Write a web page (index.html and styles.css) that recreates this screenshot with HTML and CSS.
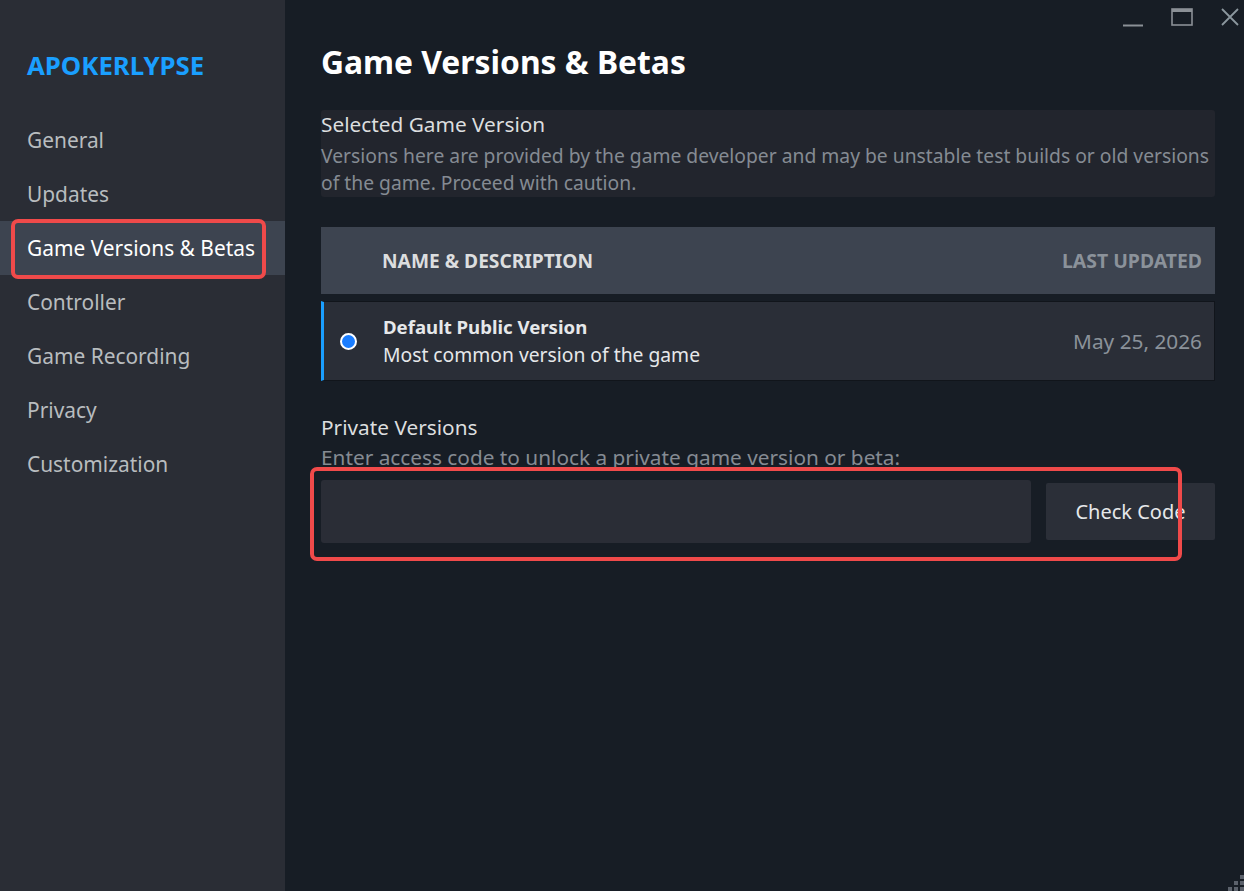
FILE: index.html
```html
<!DOCTYPE html>
<html lang="en">

<head>
    <meta charset="UTF-8">
    <meta name="viewport" content="width=device-width, initial-scale=1.0">
    <title>Game Versions &amp; Betas</title>
    <link rel="stylesheet" href="styles.css">
</head>

<body>
    <div class="app">
        <div class="sidebar">
            <h2 class="game-title">APOKERLYPSE</h2>
            <ul class="nav">
                <li>General</li>
                <li>Updates</li>
                <li class="active marked">Game Versions &amp; Betas</li>
                <li>Controller</li>
                <li>Game Recording</li>
                <li>Privacy</li>
                <li>Customization</li>
            </ul>
        </div>

        <div class="main">
            <h1>Game Versions &amp; Betas</h1>

            <div class="info-box">
                <div class="label">Selected Game Version</div>
                <p class="desc">Versions here are provided by the game developer and may be unstable test builds or old versions<br>of the game. Proceed with caution.</p>
            </div>

            <div class="table-head">
                <span class="col-name">NAME &amp; DESCRIPTION</span>
                <span class="col-date">LAST UPDATED</span>
            </div>

            <div class="version-row selected">
                <span class="radio"></span>
                <div class="version-text">
                    <div class="version-name">Default Public Version</div>
                    <div class="version-desc">Most common version of the game</div>
                </div>
                <span class="version-date">May 25, 2026</span>
            </div>

            <div class="private">
                <div class="label">Private Versions</div>
                <p class="desc">Enter access code to unlock a private game version or beta:</p>
                <div class="code-row marked">
                    <input type="text" class="code-input">
                    <button class="check-btn">Check Code</button>
                </div>
            </div>
        </div>

        <!-- window buttons sit over the main area -->
        <div class="window-controls">
            <svg width="22" height="20" viewBox="0 0 22 20"><line x1="1" y1="18.5" x2="21" y2="18.5" stroke="#8b9096" stroke-width="2"/></svg>
            <svg width="24" height="20" viewBox="0 0 24 20"><rect x="2" y="2" width="20" height="16" fill="none" stroke="#8b9096" stroke-width="1.6"/><rect x="2" y="2" width="20" height="3" fill="#8b9096"/></svg>
            <svg width="20" height="20" viewBox="0 0 20 20"><path d="M2 2 L18 18 M18 2 L2 18" stroke="#8b979e" stroke-width="1.8"/></svg>
        </div>

        <div class="grip">
            <svg width="20" height="20" viewBox="0 0 20 20" fill="#5b616b">
                <rect x="16" y="4" width="4" height="4"/>
                <rect x="10" y="10" width="4" height="4"/>
                <rect x="16" y="10" width="4" height="4"/>
                <rect x="4" y="16" width="4" height="4"/>
                <rect x="10" y="16" width="4" height="4"/>
                <rect x="16" y="16" width="4" height="4"/>
            </svg>
        </div>
    </div>
</body>

</html>
```

FILE: styles.css
```css
body {
    margin: 0;
    padding: 0;
    font-family: "Noto Sans", "Open Sans", Arial, sans-serif;
    background-color: #171d25;
    color: #dcdedf;
    overflow: hidden;
}

.app {
    display: flex;
    height: 100vh;
    position: relative;
}

.sidebar {
    width: 285px;
    flex-shrink: 0;
    background-color: #2a2d35;
    padding-top: 50px;
}

.game-title {
    margin: 0 0 33px 27px;
    font-size: 25.8px;
    line-height: 30px;
    font-weight: 700;
    color: #1a9fff;
}

.nav {
    list-style: none;
    margin: 0;
    padding: 0;
}

.nav li {
    height: 54px;
    line-height: 54px;
    padding-left: 27px;
    font-size: 20.9px;
    color: #b8bcbf;
    position: relative;
}

.nav li.active {
    background-color: #3d4450;
    color: #fff;
}

/* red annotation boxes drawn over the screenshot */
.marked::after {
    content: "";
    position: absolute;
    border: 4px solid #f04a4a;
    border-radius: 7px;
    pointer-events: none;
}

.nav li.marked::after {
    left: 11px;
    right: 19px;
    top: -2px;
    bottom: -4px;
}

.main {
    flex: 1;
    padding: 42px 29px 0 36px;
}

.main h1 {
    margin: 0 0 28px;
    font-size: 31.8px;
    line-height: 40px;
    font-weight: 700;
    color: #fff;
}

.label {
    font-size: 20.8px;
    line-height: 28px;
    color: #dcdedf;
}

.desc {
    margin: 4px 0 0;
    font-size: 19.3px;
    line-height: 27px;
    color: #858b93;
    white-space: nowrap;
}

.info-box {
    background-color: #22252d;
    border-radius: 3px;
    height: 87px;
}

.table-head {
    margin-top: 30px;
    height: 67px;
    background-color: #3d4450;
    display: flex;
    align-items: center;
    justify-content: space-between;
    padding: 0 13px 0 61px;
    font-weight: 700;
}

.col-name {
    font-size: 19.2px;
    color: #dcdedf;
}

.col-date {
    font-size: 19.4px;
    color: #8b929a;
}

.version-row {
    margin-top: 7px;
    height: 80px;
    box-sizing: border-box;
    background-color: #2a2e37;
    border: 1px solid #11151b;
    border-left: 3px solid #1a9fff;
    display: flex;
    align-items: center;
    padding: 0 12px 0 16px;
}

.radio {
    width: 13px;
    height: 13px;
    border-radius: 50%;
    background-color: #1a7dff;
    border: 2px solid #fff;
    flex-shrink: 0;
}

.version-text {
    flex: 1;
    padding-left: 26px;
    line-height: 28px;
}

.version-name {
    font-size: 18.6px;
    font-weight: 700;
    color: #e6e8ea;
}

.version-desc {
    font-size: 19.3px;
    color: #e6e8ea;
}

.version-date {
    font-size: 20.8px;
    color: #8b929a;
}

.private {
    margin-top: 32px;
}

.private .desc {
    margin-top: 3px;
    font-size: 20.8px;
}

.code-row {
    margin-top: 9px;
    display: flex;
    align-items: center;
    gap: 15px;
    position: relative;
}

.code-row.marked::after {
    left: -11px;
    right: 33px;
    top: -13px;
    bottom: -18px;
}

.code-input {
    flex: 1;
    height: 63px;
    box-sizing: border-box;
    border: none;
    border-radius: 3px;
    background-color: #2a2d36;
    color: #fff;
    font-size: 18px;
    padding: 0 14px;
}

.check-btn {
    width: 169px;
    height: 57px;
    border: none;
    border-radius: 2px;
    background-color: #2b2f38;
    color: #e6e8ea;
    font-family: "Noto Sans", "Open Sans", Arial, sans-serif;
    font-size: 20px;
    cursor: pointer;
}

.window-controls {
    position: absolute;
    top: 7px;
    right: 4px;
    display: flex;
    gap: 26px;
    align-items: center;
}

.grip {
    position: absolute;
    right: 0;
    bottom: 0;
    line-height: 0;
}
```
